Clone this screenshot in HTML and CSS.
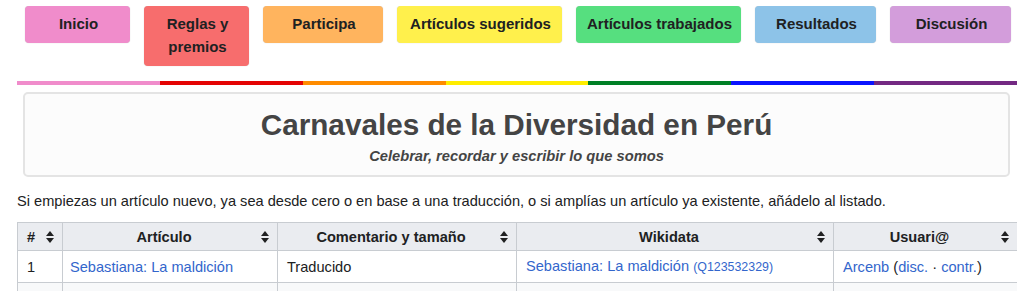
FILE: index.html
```html
<!DOCTYPE html>
<html lang="es">
  <head>
    <meta charset="UTF-8" />
    <meta name="viewport" content="width=device-width, initial-scale=1.0" />
    <title>Carnavales de la Diversidad en Perú</title>
    <link rel="stylesheet" href="styles.css">
  </head>
  <body>
    <nav class="menu">
      <a class="tab tab-inicio" href="#">Inicio</a>
      <a class="tab tab-reglas" href="#">Reglas y premios</a>
      <a class="tab tab-participa" href="#">Participa</a>
      <a class="tab tab-sugeridos" href="#">Artículos sugeridos</a>
      <a class="tab tab-trabajados" href="#">Artículos trabajados</a>
      <a class="tab tab-resultados" href="#">Resultados</a>
      <a class="tab tab-discusion" href="#">Discusión</a>
    </nav>

    <div class="rainbow">
      <span class="pink"></span>
      <span class="red"></span>
      <span class="orange"></span>
      <span class="yellow"></span>
      <span class="green"></span>
      <span class="blue"></span>
      <span class="purple"></span>
    </div>

    <header class="banner">
      <h1>Carnavales de la Diversidad en Perú</h1>
      <p>Celebrar, recordar y escribir lo que somos</p>
    </header>

    <p class="intro">Si empiezas un artículo nuevo, ya sea desde cero o en base a una traducción, o si amplías un artículo ya existente, añádelo al listado.</p>

    <table class="listado">
      <colgroup>
        <col class="c-num" />
        <col class="c-art" />
        <col class="c-com" />
        <col class="c-wd" />
        <col class="c-user" />
      </colgroup>
      <thead>
        <tr>
          <th class="left">#<span class="sort"></span></th>
          <th>Artículo<span class="sort"></span></th>
          <th>Comentario y tamaño<span class="sort"></span></th>
          <th>Wikidata<span class="sort"></span></th>
          <th>Usuari@<span class="sort"></span></th>
        </tr>
      </thead>
      <tbody>
        <tr>
          <td>1</td>
          <td><a href="#">Sebastiana: La maldición</a></td>
          <td>Traducido</td>
          <td><a href="#">Sebastiana: La maldición</a> <a class="qid" href="#">(Q123532329)</a></td>
          <td><a href="#">Arcenb</a> (<a href="#">disc.</a> · <a href="#">contr.</a>)</td>
        </tr>
        <tr class="stripe">
          <td>#</td>
          <td><a href="#">{{{artículo}}}</a></td>
          <td>Creado/Traducido/Ampliado</td>
          <td><a href="#">{{{Q}}}</a> <a class="qid" href="#">(Q)</a></td>
          <td><a href="#">{{{usuario}}}</a></td>
        </tr>
      </tbody>
    </table>
  </body>
</html>
```

FILE: styles.css
```css
body {
  margin: 6px 7px 0 17px;
  font-family: "Liberation Sans", Arial, sans-serif;
  color: #202122;
  background: #fff;
}

a {
  color: #3366cc;
  text-decoration: none;
}

.menu {
  display: flex;
  gap: 14px;
  padding-left: 8px;
  align-items: flex-start;
}

.tab {
  display: block;
  box-sizing: border-box;
  padding: 6px 7px 8px 9px;
  border-radius: 4px;
  color: #202122;
  font-size: 15px;
  font-weight: bold;
  line-height: 23px;
  text-align: center;
  box-shadow: 0 0 1px rgba(0, 0, 0, 0.25);
}

.tab-inicio { width: 105px; background: #f08ccb; }
.tab-reglas { width: 105px; background: #f76d6d; }
.tab-participa { width: 120px; background: #ffb45e; }
.tab-sugeridos { width: 165px; background: #fff04c; }
.tab-trabajados { width: 165px; background: #56df7f; }
.tab-resultados { width: 121px; background: #8dc3e8; }
.tab-discusion { width: 121px; background: #d39ddb; }

.rainbow {
  display: flex;
  width: 1000px;
  height: 4px;
  margin-top: 15px;
}

.rainbow span {
  flex: 1;
}

.pink { background: #f08ccb; }
.red { background: #e40303; }
.orange { background: #ff8c00; }
.yellow { background: #ffed00; }
.green { background: #008026; }
.blue { background: #0a14ff; }
.purple { background: #732982; }

.banner {
  box-sizing: border-box;
  width: 987px;
  height: 85px;
  margin: 7px 0 0 6px;
  padding-top: 13px;
  background: #fcfcfc;
  border: 2px solid #e4e4e4;
  border-radius: 5px;
  text-align: center;
  color: #444;
}

.banner h1 {
  margin: 0;
  font-size: 29.7px;
  line-height: 36px;
}

.banner p {
  margin: 4px 0 0;
  font-size: 14.7px;
  font-weight: bold;
  font-style: italic;
  line-height: 18px;
}

.intro {
  margin: 13px 0 10px;
  font-size: 14.6px;
  line-height: 22px;
}

.listado {
  width: 1000px;
  border-collapse: collapse;
  table-layout: fixed;
  font-size: 14.6px;
  background: #fff;
  border: 1px solid #a2a9b1;
}

.c-num { width: 45px; }
.c-art { width: 215px; }
.c-com { width: 239px; }
.c-wd { width: 317px; }
.c-user { width: 184px; }

.listado th,
.listado td {
  border: 1px solid #c8ccd1;
  padding: 4px 9px;
  line-height: 22px;
  text-align: left;
}

.listado th {
  position: relative;
  padding: 3px 21px 2px 9px;
  background: #eaecf0;
  text-align: center;
  font-weight: bold;
}

.listado th.left {
  text-align: left;
}

.listado td {
  padding: 4px 7px 4px 9px;
}

.listado td:nth-child(2) {
  padding-left: 7px;
}

.stripe td {
  background: #f8f9fa;
}

.qid {
  font-size: 12.4px;
}

.sort {
  position: absolute;
  right: 8px;
  top: 50%;
  width: 0;
  height: 0;
  margin-top: -6px;
  border-left: 4px solid transparent;
  border-right: 4px solid transparent;
  border-bottom: 5px solid #202122;
}

.sort::after {
  content: "";
  position: absolute;
  left: -4px;
  top: 7px;
  border-left: 4px solid transparent;
  border-right: 4px solid transparent;
  border-top: 5px solid #202122;
}
```
